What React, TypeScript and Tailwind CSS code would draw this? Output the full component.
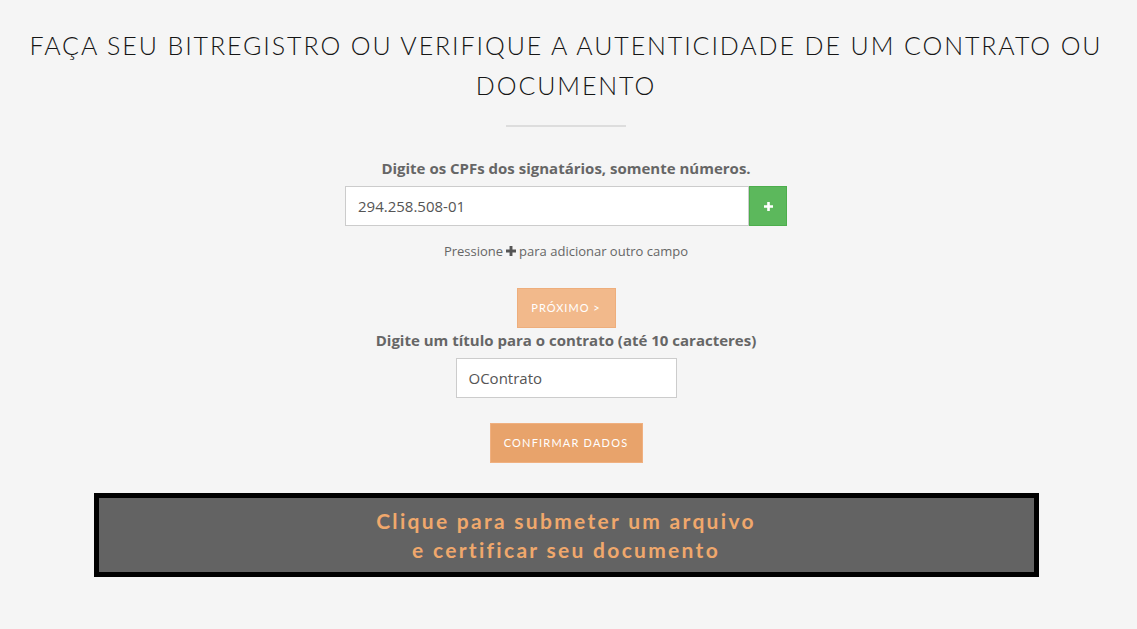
import React from "react";

export default function App() {
  const mont = { fontFamily: '"Lato", "Open Sans", sans-serif' };
  return (
    <div className="min-h-[629px] w-full bg-[#f5f5f5] flex flex-col items-center pr-[5px]" style={{ fontFamily: '"Open Sans", sans-serif' }}>
      <h1
        className="mt-[25px] text-center text-[25px] leading-[40px] tracking-[1.9px] text-[#151515] font-light"
        style={mont}
      >
        FAÇA SEU BITREGISTRO OU VERIFIQUE A AUTENTICIDADE DE UM CONTRATO OU
        <br />
        DOCUMENTO
      </h1>
      <div className="mt-[20px] w-[120px] h-[2px] bg-[#dddddd]" />
      <label className="mt-[31px] text-[15px] leading-[20px] font-bold text-[#666]">
        Digite os CPFs dos signatários, somente números.
      </label>
      <div className="mt-[8px] flex h-[40px]">
        <div className="w-[404px] h-[40px] bg-white border border-[#cccccc] flex items-center px-[12px] text-[15px] text-[#555]">
          294.258.508-01
        </div>
        <button className="w-[38px] h-[40px] bg-[#5cb85c] border border-[#4cae4c] flex items-center justify-center">
          <svg width="9" height="9" viewBox="0 0 9 9">
            <path d="M3.2 0h2.6v3.2H9v2.6H5.8V9H3.2V5.8H0V3.2h3.2z" fill="#fff" />
          </svg>
        </button>
      </div>
      <p className="mt-[15px] text-[13px] leading-[20px] text-[#666] flex items-center gap-[3px]">
        Pressione
        <svg width="10" height="10" viewBox="0 0 9 9">
          <path d="M3.2 0h2.6v3.2H9v2.6H5.8V9H3.2V5.8H0V3.2h3.2z" fill="#555" />
        </svg>
        para adicionar outro campo
      </p>
      <button
        className="mt-[27px] w-[99px] h-[40px] bg-[#f2b98b] border border-[#eeae7c] text-white text-[11px] tracking-[1px]"
        style={mont}
      >
        PRÓXIMO &gt;
      </button>
      <label className="mt-[2px] text-[15px] leading-[20px] font-bold text-[#666]">
        Digite um título para o contrato (até 10 caracteres)
      </label>
      <div className="mt-[8px] w-[221px] h-[40px] bg-white border border-[#cccccc] flex items-center px-[12px] text-[15px] text-[#555]">
        OContrato
      </div>
      <button
        className="mt-[25px] w-[153px] h-[40px] bg-[#e8a36b] border border-[#f0b080] text-white text-[11px] tracking-[1.2px]"
        style={mont}
      >
        CONFIRMAR DADOS
      </button>
      <div
        className="mt-[30px] w-[945px] h-[84px] bg-[#636363] border-[5px] border-black flex flex-col items-center justify-center text-[#f0a86c] text-[21px] leading-[29px] font-bold tracking-[2.3px]"
        style={mont}
      >
        <span>Clique para submeter um arquivo</span>
        <span>e certificar seu documento</span>
      </div>
    </div>
  );
}
